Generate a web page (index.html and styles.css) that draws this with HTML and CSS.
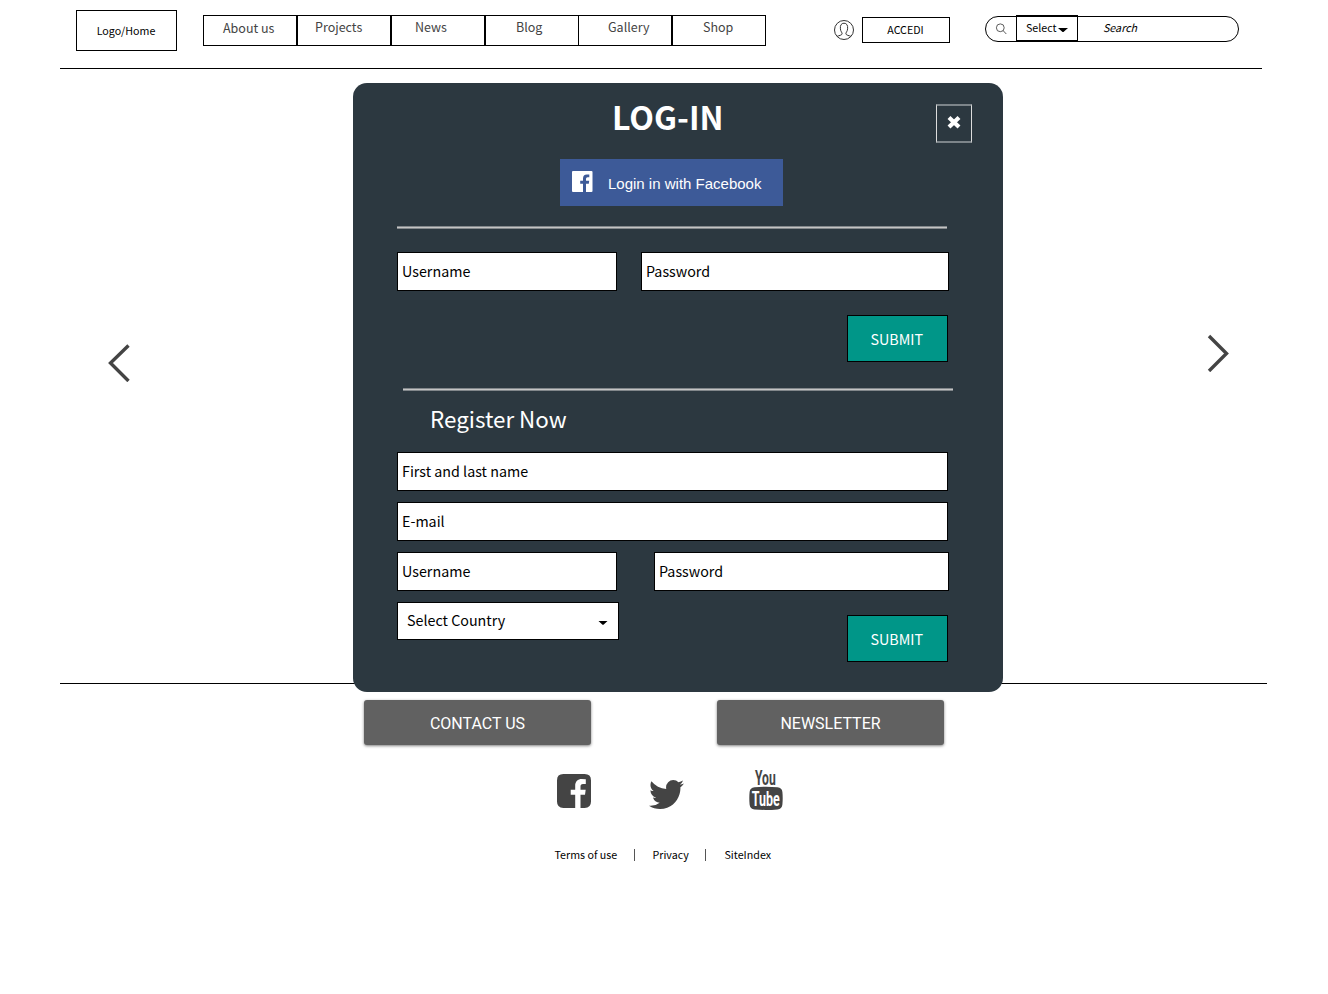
FILE: index.html
```html
<!DOCTYPE html>
<html lang="en">
<head>
<meta charset="utf-8">
<title>Log-in</title>
<link rel="stylesheet" href="styles.css">
</head>
<body>
<header class="header">
  <a class="logo">Logo/Home</a>
  <nav class="nav">
    <a class="tab tab-about">About us</a>
    <a class="tab tab-projects">Projects</a>
    <a class="tab tab-news">News</a>
    <a class="tab tab-blog">Blog</a>
    <a class="tab tab-gallery">Gallery</a>
    <a class="tab tab-shop">Shop</a>
  </nav>
  <svg class="user" viewBox="0 0 20 20" width="20" height="20" fill="none" stroke="#333" stroke-width="1">
    <circle cx="10" cy="10" r="9.5"/>
    <path d="M3 16.4C5 15.5 8 15.3 8.1 13.8C8.2 12.4 6.6 11.6 6.4 8.8C6 5.300 7.300 3.200 10 3.200S14 5.300 13.600 8.800C13.400 11.600 11.800 12.400 11.900 13.800C12 15.300 15 15.500 17 16.400"/>
  </svg>
  <a class="accedi">ACCEDI</a>
  <div class="search">
    <span class="search-icon"><svg viewBox="0 0 12 12" width="12" height="12" fill="none" stroke="#333" stroke-width=".8"><circle cx="5.300" cy="4.800" r="3.900"/><path d="M8.100 7.600L11.300 11"/></svg></span>
    <span class="search-select">Select<svg viewBox="0 0 10 5" width="10" height="5"><path d="M0 0H10L6 3.500Q5 4.500 4 3.500Z"/></svg></span>
    <span class="search-text">Search</span>
  </div>
</header>
<main class="stage">
  <svg class="arrow arrow-left" viewBox="0 0 22 38" width="22" height="38"><path d="M20.500 1.500L2.500 19L20.500 37"/></svg>
  <section class="modal">
    <div class="modal-head">
      <h1 class="title">LOG-IN</h1>
      <button class="close"><svg viewBox="0 0 14 14" width="14" height="14"><path d="M2 2.500L12 12M12 2.500L2 12"/></svg></button>
    </div>
    <a class="facebook">
      <svg viewBox="0 0 21 21" width="21" height="21"><rect width="20.500" height="21" rx="1" fill="#fff"/><path d="M11 21V12.800H8.200V9.800H11V7.600Q11 3.400 14.900 3.400H17.300V6.300H15.500Q14 6.300 14 7.800V9.800H17.200L16.800 12.800H14V21Z" fill="#3d5a98"/></svg>
      <span>Login in with Facebook</span>
    </a>
    <div class="rule"></div>
    <div class="row login-row">
      <div class="field short">Username</div>
      <div class="field login-pass">Password</div>
    </div>
    <button class="submit">SUBMIT</button>
    <div class="rule rule-second"></div>
    <h2 class="subtitle">Register Now</h2>
    <div class="field wide">First and last name</div>
    <div class="field wide">E-mail</div>
    <div class="row">
      <div class="field short">Username</div>
      <div class="field register-pass">Password</div>
    </div>
    <div class="row">
      <div class="country"><span>Select Country</span><svg viewBox="0 0 10 5" width="10" height="5"><path d="M.5 0H9.500L6 3.300Q5 4.300 4 3.300Z"/></svg></div>
      <button class="submit submit-register">SUBMIT</button>
    </div>
  </section>
  <svg class="arrow arrow-right" viewBox="0 0 22 38" width="22" height="38"><path d="M2 2L19.500 19.500L2 37"/></svg>
</main>
<footer class="footer">
  <div class="actions">
    <a class="action">CONTACT US</a>
    <a class="action">NEWSLETTER</a>
  </div>
  <div class="social">
    <svg class="fb" viewBox="0 0 34 34" width="34" height="34"><path fill="#444" d="M6.400 0H27.600Q34 0 34 6.400V27.600Q34 34 27.600 34H23.500V20.800H28L28.700 15.700H23.500V12.400C23.500 10.800 24 9.900 26.100 9.900H28.800V5.300Q27 5 24.800 5C20.800 5 18.200 7.400 18.200 11.900V15.700H13.700V20.800H18.200V34H6.400Q0 34 0 27.600V6.400Q0 0 6.400 0Z"/></svg>
    <svg class="tw" viewBox="0 0 1576 1280" width="35" height="29" preserveAspectRatio="none"><path fill="#444" d="M1576 152q-67 98-162 167 1 14 1 42 0 130-38 259.500T1261.500 869 1077 1079.500t-258 146-323 54.500q-271 0-496-145 35 4 78 4 225 0 401-138-105-2-188-64.500T177 777q33 5 61 5 43 0 85-11-112-23-185.500-111.500T64 454v-4q68 38 146 41-66-44-105-115T66 222q0-88 44-163 121 149 294.500 238.500T776 397q-8-38-8-74 0-134 94.500-228.500T1091 0q140 0 236 102 109-21 205-78-37 115-142 178 93-10 186-50z"/></svg>
    <svg class="yt" viewBox="0 0 34 42" width="34" height="42">
      <text class="yt-text" transform="translate(6 15.500) scale(.59 1)" font-size="20.500" fill="#444">You</text>
      <path fill="#444" d="M5.500 18.200Q17 17.200 28.500 18.200Q33 18.600 33.400 23Q34 29 33.400 35.500Q33 40 28.500 40.400Q17 41.400 5.500 40.400Q1 40 .6 35.500Q0 29 .6 23Q1 18.600 5.500 18.200Z"/>
      <text class="yt-text" transform="translate(2.800 36.500) scale(.61 1)" font-size="20.500" fill="#fff">Tube</text>
    </svg>
  </div>
  <div class="links"><a class="terms">Terms of use</a><span class="bar"></span><a class="privacy">Privacy</a><span class="bar"></span><a>SiteIndex</a></div>
</footer>
</body>
</html>
```
FILE: styles.css
```css
* { box-sizing: border-box; }
body { margin: 0; background: #fff; color: #000; font-family: "Noto Sans CJK SC", "Noto Sans", sans-serif; font-size: 14.3px; }
svg { display: block; flex: none; }
button { margin: 0; padding: 0; font: inherit; }
.header { display: flex; align-items: flex-start; height: 69px; margin: 0 66px 0 60px; padding-left: 16px; border-bottom: 1px solid #000; }
.logo { width: 101px; height: 41px; margin: 10px 26px 0 0; padding-right: 1px; border: 1px solid #000; font-size: 10.7px; line-height: 39px; text-align: center; }
.nav { display: flex; margin-top: 15px; }
.tab { width: 94px; height: 31px; border: 1px solid #000; color: #444; font-size: 12.5px; line-height: 22px; white-space: nowrap; }
.tab-about { padding-left: 19px; line-height: 24px; }
.tab-projects { padding-left: 17px; }
.tab-news { padding-left: 23px; }
.tab-blog { padding-left: 30px; }
.tab-gallery { margin-left: -1px; padding-left: 29px; }
.tab-shop { padding-left: 30px; }
.user { margin: 20px 8px 0 68px; }
.accedi { width: 88px; height: 26px; margin-top: 17px; padding-right: 1px; border: 1px solid #000; font-size: 10.7px; line-height: 23px; text-align: center; }
.search { display: flex; width: 254px; height: 26px; margin: 16px 0 0 35px; border: 1px solid #000; border-radius: 13px; font-size: 10.7px; }
.search-icon { width: 30px; padding: 6px 0 0 9px; }
.search-select { display: flex; align-items: center; width: 62px; height: 26px; margin-top: -2px; padding-left: 9px; border: 1px solid #000; line-height: 22px; }
.search-select svg { margin: 5px 0 0 1px; }
.search-text { padding-left: 25px; line-height: 21px; font-style: italic; }
.stage { display: flex; align-items: flex-start; height: 614px; padding: 14px 99px 0 108px; }
.arrow { fill: none; stroke: #444; stroke-width: 3.4; }
.arrow-left { margin: 261px 223px 0 0; }
.arrow-right { margin: 251px 0 0 204px; }
.modal { position: relative; z-index: 1; flex: none; width: 650px; height: 609px; padding: 0 31px 0 44px; border-radius: 14px; background: #2c3840; }
.modal-head { display: flex; justify-content: space-between; align-items: flex-start; padding-left: 215px; }
.title { margin: 9px 0 0; color: #fff; font-size: 32.1px; font-weight: 700; line-height: 49px; }
.close { display: flex; align-items: center; justify-content: center; width: 36px; height: 39px; margin: 21px 0 -1px; padding-bottom: 4px; border: 1px solid #ddd; border-width: 2px 1px; border-color: #7d858a #ddd; background: none; }
.close svg { fill: none; stroke: #fff; stroke-width: 4.2; }
.facebook { display: flex; width: 223px; height: 47px; margin: 17px 0 0 163px; padding: 12px 0 0 12px; background: #3d5a98; color: #fff; font: 15px/26px "Liberation Sans", Arial, sans-serif; }
.facebook span { margin-left: 15px; white-space: nowrap; }
.rule { width: 550px; height: 3px; margin-top: 20px; border: solid #82878b; border-width: 1px 0; background: #c4c4c4; }
.rule-second { margin: 26px 0 0 6px; }
.row { display: flex; justify-content: space-between; align-items: flex-start; width: 552px; }
.login-row { margin-top: 23px; }
.field { height: 39px; border: 1px solid #000; padding-left: 4px; background: #fff; line-height: 36px; margin-bottom: 11px; }
.short { width: 220px; }
.login-pass { width: 308px; }
.register-pass { width: 295px; }
.wide { width: 551px; }
.submit { display: block; width: 101px; height: 47px; margin: 13px 0 0 450px; padding-right: 1.500px; border: 1px solid #000; background: #009688; color: #fff; line-height: 45px; }
.submit-register { margin: 13px 1px 0 0; }
.subtitle { margin: 8px 0 15px 33px; color: #fff; font-size: 22.4px; font-weight: 400; line-height: 38px; }
.country { display: flex; justify-content: space-between; align-items: center; width: 222px; height: 38px; padding: 0 10px 0 9px; border: 1px solid #000; background: #fff; line-height: 33px; }
.country span { height: 36px; }
.country svg { margin-top: 5px; }
.footer { margin: 0 61px 0 60px; border-top: 1px solid #000; }
.actions { display: flex; gap: 126px; padding: 16px 0 0 304px; }
.action { width: 227px; height: 45px; border-radius: 3px; background: #616161; box-shadow: 0 1px 3px rgba(0, 0, 0, .5); color: #fff; font-family: Roboto, sans-serif; font-size: 16px; line-height: 47px; text-align: center; }
.social { display: flex; align-items: flex-start; padding: 24px 0 0 497px; }
.fb { margin-top: 5px; }
.tw { margin: 11px 65px 0 58px; }
.yt { overflow: visible; }
.yt-text { font-family: Roboto, sans-serif; font-weight: 700; }
.links { display: flex; align-items: center; margin-top: 34px; padding-left: 494.500px; font-size: 10.7px; line-height: 20px; white-space: nowrap; }
.bar { width: 1px; height: 12px; background: #555; }
.terms { width: 79px; }
.privacy { width: 52px; padding-left: 18px; box-sizing: content-box; }
.bar + a:last-child { margin-left: 19px; }
```
